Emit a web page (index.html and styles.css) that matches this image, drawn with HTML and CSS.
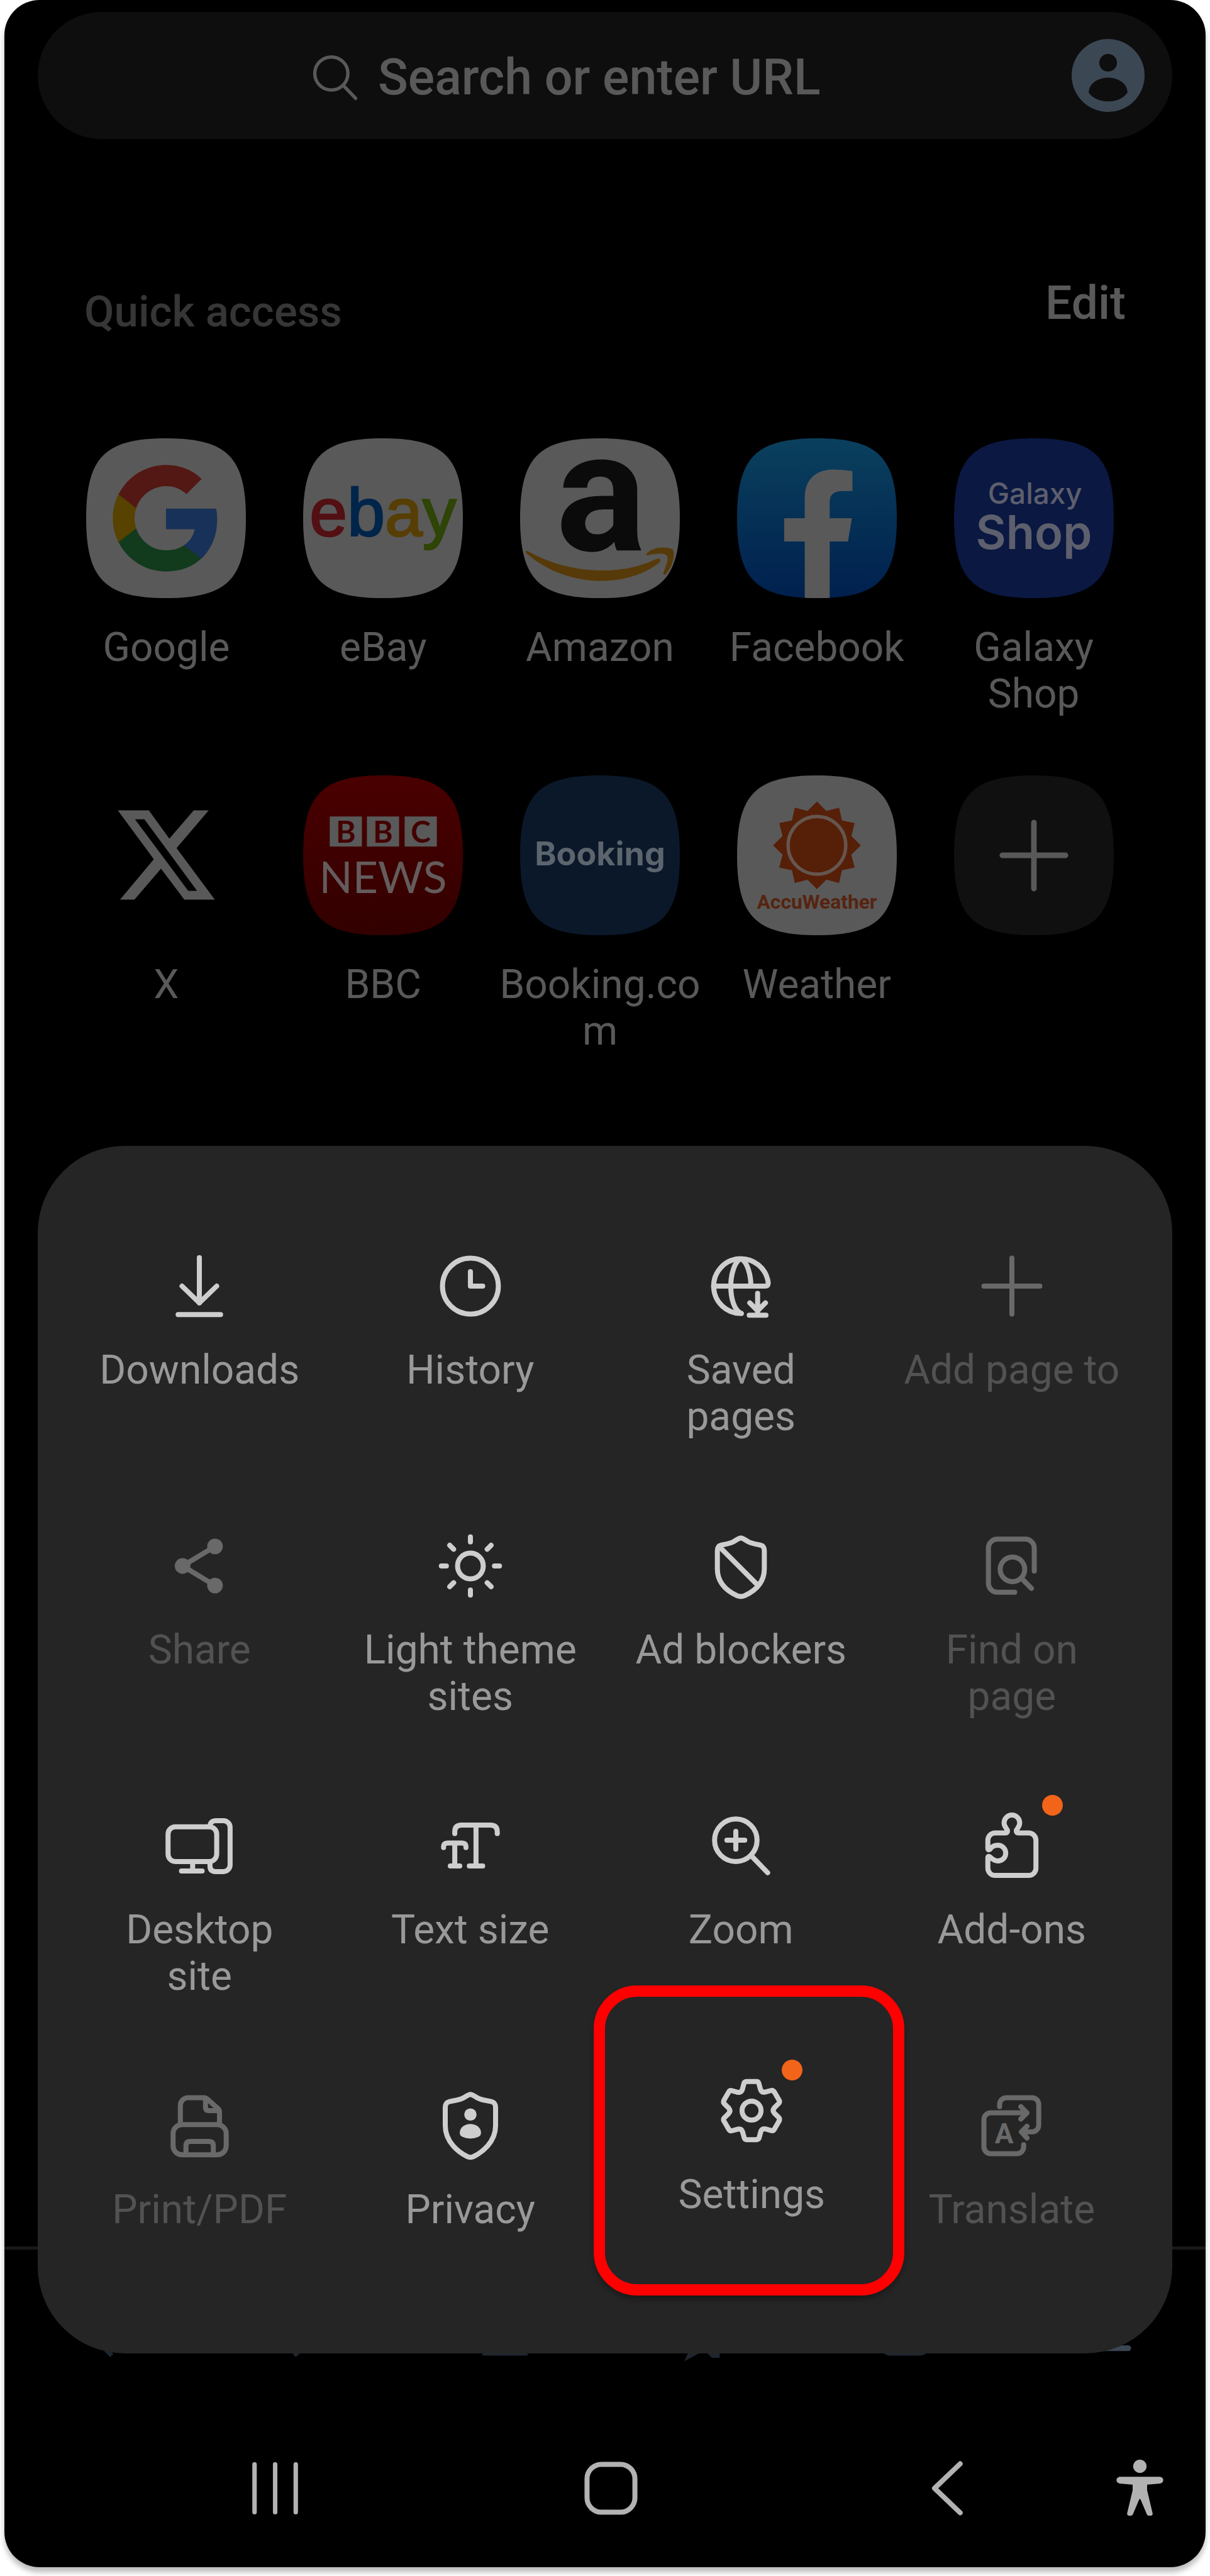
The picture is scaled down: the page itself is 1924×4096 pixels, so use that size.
FILE: index.html
```html
<!DOCTYPE html>
<html lang="en">
<head>
  <meta charset="UTF-8">
  <meta name="viewport" content="width=device-width, initial-scale=1">
  <title>New tab | Internet</title>
  <link rel="stylesheet" href="styles.css">
</head>
<body>

  <!-- Shared shapes -->
  <svg class="defs" aria-hidden="true">
    <defs>
      <path id="squircle" d="M0 144C0 34 34 0 144 0S288 34 288 144 254 288 144 288 0 254 0 144Z"/>
      <clipPath id="tileClip"><use href="#squircle"/></clipPath>
      <linearGradient id="fbBlue" x1="0" y1="0" x2="0" y2="1">
        <stop offset="0" stop-color="#0a405d"/>
        <stop offset="1" stop-color="#00204e"/>
      </linearGradient>
      <linearGradient id="bbcRed" x1="0" y1="0" x2="0" y2="1">
        <stop offset="0" stop-color="#4a0000"/>
        <stop offset="1" stop-color="#320000"/>
      </linearGradient>
      <path id="tooth" d="M-9-52H9Q12-52 13-49L16-38Q18-32 24-33L35-36Q38-37 40-34"/>
    </defs>
  </svg>

  <div class="screen">

    <form class="search-bar">
      <div class="search-field">
        <svg class="search-icon" viewBox="0 0 82 82"><circle cx="34" cy="34" r="30"/><path d="M56 56L78 79"/></svg>
        <input type="text" aria-label="Search or enter URL" placeholder="Search or enter URL">
      </div>
      <button type="button" class="account" aria-label="Account">
        <svg viewBox="0 0 132 132">
          <circle cx="66" cy="66" r="66" fill="#3c4754"/>
          <circle cx="66" cy="43" r="16" fill="#0e0e0e"/>
          <path d="M31 97C31 81 47 70 66 70S101 81 101 97C94 107 82 113 66 113S38 107 31 97Z" fill="#0e0e0e"/>
        </svg>
      </button>
    </form>

    <div class="section-head">
      <h2>Quick access</h2>
      <button type="button">Edit</button>
    </div>

    <nav class="tiles">
      <a href="#google">
        <svg viewBox="0 0 288 288">
          <use href="#squircle" fill="#595959"/>
          <g transform="translate(39.3 39.3) scale(8.727)">
            <path fill="#183158" d="M22.56 12.25c0-.78-.07-1.53-.2-2.25H12v4.26h5.92c-.26 1.37-1.04 2.53-2.21 3.31v2.77h3.57c2.08-1.92 3.28-4.74 3.28-8.09z"/>
            <path fill="#123a1c" d="M12 23c2.97 0 5.46-.98 7.28-2.66l-3.57-2.77c-.98.66-2.23 1.06-3.71 1.06-2.86 0-5.29-1.93-6.16-4.53H2.18v2.84C3.99 20.53 7.7 23 12 23z"/>
            <path fill="#574200" d="M5.84 14.09c-.22-.66-.35-1.36-.35-2.09s.13-1.43.35-2.09V7.07H2.18C1.43 8.55 1 10.22 1 12s.43 3.45 1.18 4.93l2.85-2.22.81-.62z"/>
            <path fill="#531814" d="M12 5.38c1.62 0 3.06.56 4.21 1.64l3.15-3.15C17.45 2.09 14.97 1 12 1 7.7 1 3.99 3.47 2.18 7.07l3.66 2.84c.87-2.6 3.3-4.53 6.16-4.53z"/>
          </g>
        </svg>
        <span>Google</span>
      </a>
      <a href="#ebay">
        <svg viewBox="0 0 288 288">
          <use href="#squircle" fill="#595959"/>
          <text class="logo-ebay" x="144" y="176"><tspan fill="#531014" stroke="#531014">e</tspan><tspan fill="#00254a" stroke="#00254a">b</tspan><tspan fill="#573e05" stroke="#573e05">a</tspan><tspan fill="#2f4407" stroke="#2f4407">y</tspan></text>
        </svg>
        <span>eBay</span>
      </a>
      <a href="#amazon">
        <svg viewBox="0 0 288 288">
          <use href="#squircle" fill="#595959"/>
          <text class="logo-amazon" x="146" y="202">a</text>
          <g fill="#573a09">
            <path d="M13 203C90 246 180 248 245 218Q255 214 252 223C195 270 85 272 11 207Q9 202 13 203Z"/>
            <path d="M228 208C238 196 262 194 275 200C281 210 274 234 261 246Q257 247 259 241C264 228 268 216 265 212C260 205 242 208 230 211Q226 211 228 208Z"/>
          </g>
        </svg>
        <span>Amazon</span>
      </a>
      <a href="#facebook">
        <svg viewBox="0 0 288 288">
          <g clip-path="url(#tileClip)">
            <rect width="288" height="288" fill="url(#fbBlue)"/>
            <path fill="#595959" d="M122 288V186H85V144H122V107C122 74 142 56 174 56Q190 56 208 59V95H191Q167 95 167 114V144H207L200 186H167V288Z"/>
          </g>
        </svg>
        <span>Facebook</span>
      </a>
      <a href="#galaxy-shop">
        <svg viewBox="0 0 288 288">
          <use href="#squircle" fill="#0a1842"/>
          <text class="logo-galaxy" x="146" y="118">Galaxy</text>
          <text class="logo-shop" x="144" y="200">Shop</text>
        </svg>
        <span>Galaxy Shop</span>
      </a>
      <a href="#x">
        <svg viewBox="0 0 288 288">
          <path fill="#595959" fill-rule="evenodd" d="M57 63H113L150 114L194 63H221L163 131L232 224H177L135 168L87 224H61L122 151ZM88 79H105L200 208H184Z"/>
        </svg>
        <span>X</span>
      </a>
      <a href="#bbc">
        <svg viewBox="0 0 288 288">
          <use href="#squircle" fill="url(#bbcRed)"/>
          <path fill="#595959" d="M48 74h58v54H48zM115 74h58v54h-58zM183 74h58v54h-58z"/>
          <text class="logo-bbc" x="77" y="121">B</text>
          <text class="logo-bbc" x="144" y="121">B</text>
          <text class="logo-bbc" x="212" y="121">C</text>
          <text class="logo-news" x="144" y="212">NEWS</text>
        </svg>
        <span>BBC</span>
      </a>
      <a href="#booking">
        <svg viewBox="0 0 288 288">
          <use href="#squircle" fill="#0a182a"/>
          <text class="logo-booking" x="144" y="162">Booking</text>
        </svg>
        <span>Booking.com</span>
      </a>
      <a href="#weather">
        <svg viewBox="0 0 288 288">
          <use href="#squircle" fill="#595959"/>
          <g transform="translate(144 126)" fill="#561f08">
            <path d="M0-79L17-62L40-68L45-45L68-40L62-17L79 0L62 17L68 40L45 45L40 68L17 62L0 79L-17 62L-40 68L-45 45L-68 40L-62 17L-79 0L-62-17L-68-40L-45-45L-40-68L-17-62Z"/>
            <circle r="52" fill="none" stroke="#65564f" stroke-width="6"/>
          </g>
          <text class="logo-accu" x="144" y="240">AccuWeather</text>
        </svg>
        <span>Weather</span>
      </a>
      <a href="#add" aria-label="Add shortcut">
        <svg viewBox="0 0 288 288">
          <use href="#squircle" fill="#101010"/>
          <path d="M144 85V204M87 144H201" stroke="#595959" stroke-width="10" stroke-linecap="round"/>
        </svg>
      </a>
    </nav>

    <div class="menu">
      <button type="button">
        <svg viewBox="-72 -72 144 144"><path d="M0-51V30M-31 0L0 30L31 0M-38 51H38"/></svg>
        <span>Downloads</span>
      </button>
      <button type="button">
        <svg viewBox="-72 -72 144 144"><circle r="50"/><path d="M0-26V0H22"/></svg>
        <span>History</span>
      </button>
      <button type="button">
        <svg viewBox="-72 -72 144 144"><path d="M1 49A49 49 0 1 1 49-6Q49 0 43 0H-49M1 49C-12 44-18 22-18 0S-11-44 0-49C11-44 18-22 18 0M30 13V46M16 30L30 44L44 30M15 52H45"/></svg>
        <span>Saved pages</span>
      </button>
      <button type="button" disabled>
        <svg viewBox="-72 -72 144 144"><path d="M0-50V50M-50 0H50"/></svg>
        <span>Add page to</span>
      </button>

      <button type="button" disabled>
        <svg viewBox="-72 -72 144 144"><path d="M28-35L-30 0L28 35"/><g class="solid"><circle cx="-30" r="14"/><circle cx="28" cy="-35" r="14"/><circle cx="28" cy="35" r="14"/></g></svg>
        <span>Share</span>
      </button>
      <button type="button">
        <svg viewBox="-72 -72 144 144"><circle r="23"/><path d="M0-52V-43M0 43V52M-52 0H-43M43 0H52M-37-37L-30-30M30 30L37 37M-37 37L-30 30M30-30L37-37"/></svg>
        <span>Light theme sites</span>
      </button>
      <button type="button">
        <svg viewBox="-72 -72 144 144"><path d="M0-50C-4-50-8-46-14-43C-22-39-30-39-36-37C-40-36-42-32-42-27V5C-42 33-22 46-7 53Q0 56 7 53C22 46 42 33 42 5V-27C42-32 40-36 36-37C30-39 22-39 14-43C8-46 4-50 0-50ZM-38-34L29 33"/></svg>
        <span>Ad blockers</span>
      </button>
      <button type="button" disabled>
        <svg viewBox="-72 -72 144 144"><path d="M5 47H-26A16 16 0 0 1-42 31V-32A16 16 0 0 1-26-48H24A16 16 0 0 1 40-32V9M18 23L35 40"/><circle cx="1" cy="6" r="22"/></svg>
        <span>Find on page</span>
      </button>

      <button type="button">
        <svg viewBox="-72 -72 144 144"><rect x="-56" y="-34" width="87" height="62" rx="13"/><path d="M-12 28V45M-32 45H5M19-37Q21-45 29-45H43A12 12 0 0 1 55-33V34A12 12 0 0 1 43 46H29Q19 46 19 36V30"/></svg>
        <span>Desktop site</span>
      </button>
      <button type="button">
        <svg viewBox="-72 -72 144 144"><path d="M-28-22V-25Q-28-37-16-37H36Q48-37 48-25V-22M10-37V36M-2 36H22M-48 3V2Q-48-5-40-5H-16Q-8-5-8 2V3M-28-5V36M-36 36H-19"/></svg>
        <span>Text size</span>
      </button>
      <button type="button">
        <svg viewBox="-72 -72 144 144"><circle cx="-9" cy="-10" r="38"/><path d="M-9-26V6M-25-10H7M18 17L48 48"/></svg>
        <span>Zoom</span>
      </button>
      <button type="button">
        <svg viewBox="-72 -72 144 144"><path d="M-12-23H-30A13 13 0 0 0-43-10V4Q-43 9-39 6C-35 0-31-1-25-1A14 14 0 0 1-25 27C-31 27-35 24-39 20Q-43 17-43 22V40A13 13 0 0 0-30 53H30A13 13 0 0 0 43 40V-10A13 13 0 0 0 30-23H12Q7-23 8-28C11-33 14-35 14-41A14 14 0 0 0-14-41C-14-35-11-33-8-28Q-7-23-12-23Z"/></svg>
        <i class="dot"></i>
        <span>Add-ons</span>
      </button>

      <button type="button" disabled>
        <svg viewBox="-72 -72 144 144"><path d="M-34-2V-36A14 14 0 0 1-20-50H8Q12-50 15-47L33-31Q36-28 36-24V-2M11-48V-33Q11-27 17-27H34M-24 52V36Q-24 28-16 28H17Q25 28 25 36V52"/><rect x="-47" y="-2" width="95" height="54" rx="16"/></svg>
        <span>Print/PDF</span>
      </button>
      <button type="button">
        <svg viewBox="-72 -72 144 144"><path d="M0-56C-4-56-8-52-14-49C-22-45-32-45-38-43Q-45-41-45-33V0C-45 30-20 48-6 55Q0 58 6 55C20 48 45 30 45 0V-33Q45-41 38-43C32-45 22-45 14-49C8-52 4-56 0-56Z"/><g class="solid"><circle cy="-20" r="11"/><path d="M-19 13C-19 3-10-3 0-3S19 3 19 13Q19 18 14 20Q8 23 0 23T-14 20Q-19 18-19 13Z"/></g></svg>
        <span>Privacy</span>
      </button>
      <div class="cell">
        <div class="highlight">
          <button type="button">
            <svg viewBox="-72 -72 144 144"><use href="#tooth"/><use href="#tooth" transform="rotate(60)"/><use href="#tooth" transform="rotate(120)"/><use href="#tooth" transform="rotate(180)"/><use href="#tooth" transform="rotate(240)"/><use href="#tooth" transform="rotate(300)"/><circle r="17"/></svg>
            <i class="dot"></i>
            <span>Settings</span>
          </button>
        </div>
      </div>
      <button type="button" disabled>
        <svg viewBox="-72 -72 144 144"><path d="M26-23H-38A12 12 0 0 0-50-11V38A12 12 0 0 0-38 50H9A12 12 0 0 0 21 38V34M16-34L27-23L16-12M-22-34V-38A12 12 0 0 1-10-50H36A12 12 0 0 1 48-38V-1A12 12 0 0 1 36 11H20M27 1L17 11L27 22"/><text class="icon-letter" x="-14" y="31">A</text></svg>
        <span>Translate</span>
      </button>
    </div>

    <!-- Browser toolbar, mostly hidden behind the menu -->
    <div class="toolbar">
      <button type="button" aria-label="Back"><svg viewBox="0 0 80 80"><path d="M54 4L18 40L53 76"/></svg></button>
      <button type="button" aria-label="Forward"><svg viewBox="0 0 80 80"><path d="M26 4L62 40L22 76"/></svg></button>
      <button type="button" aria-label="Home"><svg viewBox="0 0 80 80"><path d="M4 36L40 4L76 36V72H4Z"/></svg></button>
      <button type="button" aria-label="Bookmarks"><svg viewBox="0 0 80 80"><path d="M40 4L50 30L76 32L60 50L62 76H54L40 62L12 77L24 50L4 32L30 30Z"/></svg></button>
      <button type="button" aria-label="Tabs"><svg viewBox="0 0 80 80"><rect x="4" y="4" width="72" height="68" rx="8"/></svg></button>
      <button type="button" aria-label="Menu" class="active"><svg viewBox="0 0 80 80"><path d="M0 13H80M0 38H80M0 63H80"/></svg></button>
    </div>

    <div class="system-nav">
      <button type="button" aria-label="Recent apps"><svg viewBox="0 0 96 96"><path d="M11 5V91M48 5V91M85 5V91" stroke-width="8"/></svg></button>
      <button type="button" aria-label="Home"><svg viewBox="0 0 96 96"><rect x="5" y="5" width="86" height="86" rx="26" stroke-width="9"/></svg></button>
      <button type="button" aria-label="Back"><svg viewBox="0 0 96 96"><path d="M72 4L26 48L72 92" stroke-width="9"/></svg></button>
      <button type="button" aria-label="Accessibility">
        <svg viewBox="0 0 96 104" class="person"><circle cx="48" cy="13" r="12"/><path d="M12 32H84Q90 33 90 38T84 44L61 46V56L71 98Q71 102 66 102T60 98L49 72H47L36 98Q35 102 30 102T25 98L35 56V46L12 44Q6 43 6 38T12 32Z"/></svg>
      </button>
    </div>

  </div>

</body>
</html>
```
FILE: styles.css
```css
* {
  box-sizing: border-box;
}

body {
  margin: 0;
  padding: 0 7px 15px;
  background-color: #fff;
  font-family: Roboto, "Liberation Sans", sans-serif;
}

button,
input {
  border: 0;
  padding: 0;
  background: none;
  font-family: inherit;
}

svg {
  display: block;
  overflow: visible;
}

.defs {
  position: absolute;
  width: 0;
  height: 0;
}

.screen {
  background-color: #000;
  border-radius: 56px;
  box-shadow: 0 8px 8px rgba(0, 0, 0, 0.26);
  padding-top: 19px;
}

/* Address bar */
.search-bar {
  display: flex;
  align-items: center;
  height: 202px;
  margin: 0 53px;
  padding: 0 44px 0 40px;
  background-color: #0e0e0e;
  border-radius: 101px;
}

.search-field {
  flex: 1;
  display: flex;
  align-items: center;
  justify-content: center;
  gap: 32px;
  padding-top: 6px;
}

.search-icon {
  width: 72px;
  height: 72px;
  fill: none;
  stroke: #595959;
  stroke-width: 6;
  stroke-linecap: round;
}

.search-field input {
  width: 706px;
  font-size: 79px;
  font-weight: 500;
  color: #595959;
}

.search-field input::placeholder {
  color: #595959;
  opacity: 1;
}

.account svg {
  width: 116px;
  height: 116px;
}

/* Quick access */
.section-head {
  display: flex;
  justify-content: space-between;
  align-items: center;
  margin: 216px 127px 0;
}

.section-head h2 {
  margin: 0;
  font-size: 69px;
  line-height: 80px;
  font-weight: 500;
  color: #363636;
}

.section-head button {
  padding-bottom: 30px;
  font-size: 75px;
  line-height: 88px;
  font-weight: 500;
  color: #595959;
}

.tiles {
  display: grid;
  grid-template-columns: repeat(5, 1fr);
  grid-auto-rows: 444px;
  row-gap: 92px;
  margin: 142px 101px 145px 85px;
}

.tiles a {
  display: flex;
  flex-direction: column;
  align-items: center;
  gap: 42px;
  font-size: 64px;
  line-height: 74px;
  color: #595959;
  text-align: center;
  text-decoration: none;
  word-break: break-word;
}

.tiles svg {
  width: 254px;
  height: 254px;
}

.tiles text {
  text-anchor: middle;
}

.logo-ebay {
  font: 122px "Liberation Sans", sans-serif;
  stroke-width: 3;
}

.logo-amazon {
  font: 700 305px Roboto, sans-serif;
  fill: #0b0b0b;
}

.logo-galaxy {
  font: 500 52px Inter, sans-serif;
  fill: #5d5f6d;
}

.logo-shop {
  font: 600 84px Inter, sans-serif;
  fill: #5d5f6d;
}

.logo-galaxy,
.logo-shop {
  line-height: 1;
}

.logo-bbc {
  font: 700 54px Lato, sans-serif;
  fill: #430000;
}

.logo-news {
  font: 400 79px Lato, sans-serif;
  fill: #645c5c;
}

.logo-booking {
  font: 700 59px Inter, sans-serif;
  fill: #5c646d;
}

.logo-accu {
  font: 700 36px Roboto, sans-serif;
  fill: #562410;
}

/* Popup menu */
.menu {
  position: relative;
  z-index: 1;
  display: grid;
  grid-template-columns: repeat(4, 1fr);
  grid-auto-rows: 307px;
  row-gap: 138px;
  margin: 0 53px -170px;
  padding: 159px 40px 119px 42px;
  background-color: #252525;
  border-radius: 138px;
}

.menu button {
  position: relative;
  display: flex;
  flex-direction: column;
  align-items: center;
  gap: 33px;
  width: 344px;
  justify-self: center;
  font-size: 64px;
  line-height: 74px;
  color: #999;
}

.menu svg {
  width: 128px;
  height: 128px;
  fill: none;
  stroke: #cecece;
  stroke-width: 9;
  stroke-linecap: round;
  stroke-linejoin: round;
}

.menu .solid {
  fill: #cecece;
  stroke: none;
}

.menu button:disabled {
  color: #525252;
}

.menu button:disabled svg {
  stroke: #696969;
}

.menu button:disabled .solid {
  fill: #696969;
}

.icon-letter {
  font: 700 50px Roboto, sans-serif;
  fill: #696969;
  stroke: none;
  text-anchor: middle;
}

.dot {
  position: absolute;
  top: -17px;
  left: calc(50% + 48px);
  width: 33px;
  height: 33px;
  border-radius: 50%;
  background-color: #f26419;
}

.cell {
  position: relative;
}

.highlight {
  position: absolute;
  top: -159px;
  left: calc(50% - 234px);
  width: 494px;
  height: 493px;
  display: flex;
  justify-content: center;
  padding: 117px 0 0 8px;
  border: 18px solid #f00;
  border-radius: 69px;
  box-shadow: 0 6px 8px rgba(0, 0, 0, 0.3);
  background-color: #252525;
}

/* Bottom bars */
.toolbar {
  display: grid;
  grid-template-columns: repeat(6, 1fr);
  height: 258px;
  padding-top: 100px;
  border-top: 5px solid #191919;
}

.toolbar button {
  display: flex;
  justify-content: center;
}

.toolbar svg {
  width: 72px;
  height: 72px;
  fill: none;
  stroke: #20262e;
  stroke-width: 8;
}

.toolbar .active svg {
  stroke: #3c4754;
  stroke-width: 10;
  stroke-linecap: round;
}

.system-nav {
  display: grid;
  grid-template-columns: repeat(3, 1fr) 80px;
  align-items: center;
  justify-items: center;
  height: 252px;
  padding: 0 65px 0 163px;
}

.system-nav svg {
  width: 85px;
  height: 85px;
  fill: none;
  stroke: #b2b2b2;
  stroke-linecap: round;
  stroke-linejoin: round;
}

.system-nav .person {
  height: 92px;
  fill: #b2b2b2;
  stroke: none;
}
```
